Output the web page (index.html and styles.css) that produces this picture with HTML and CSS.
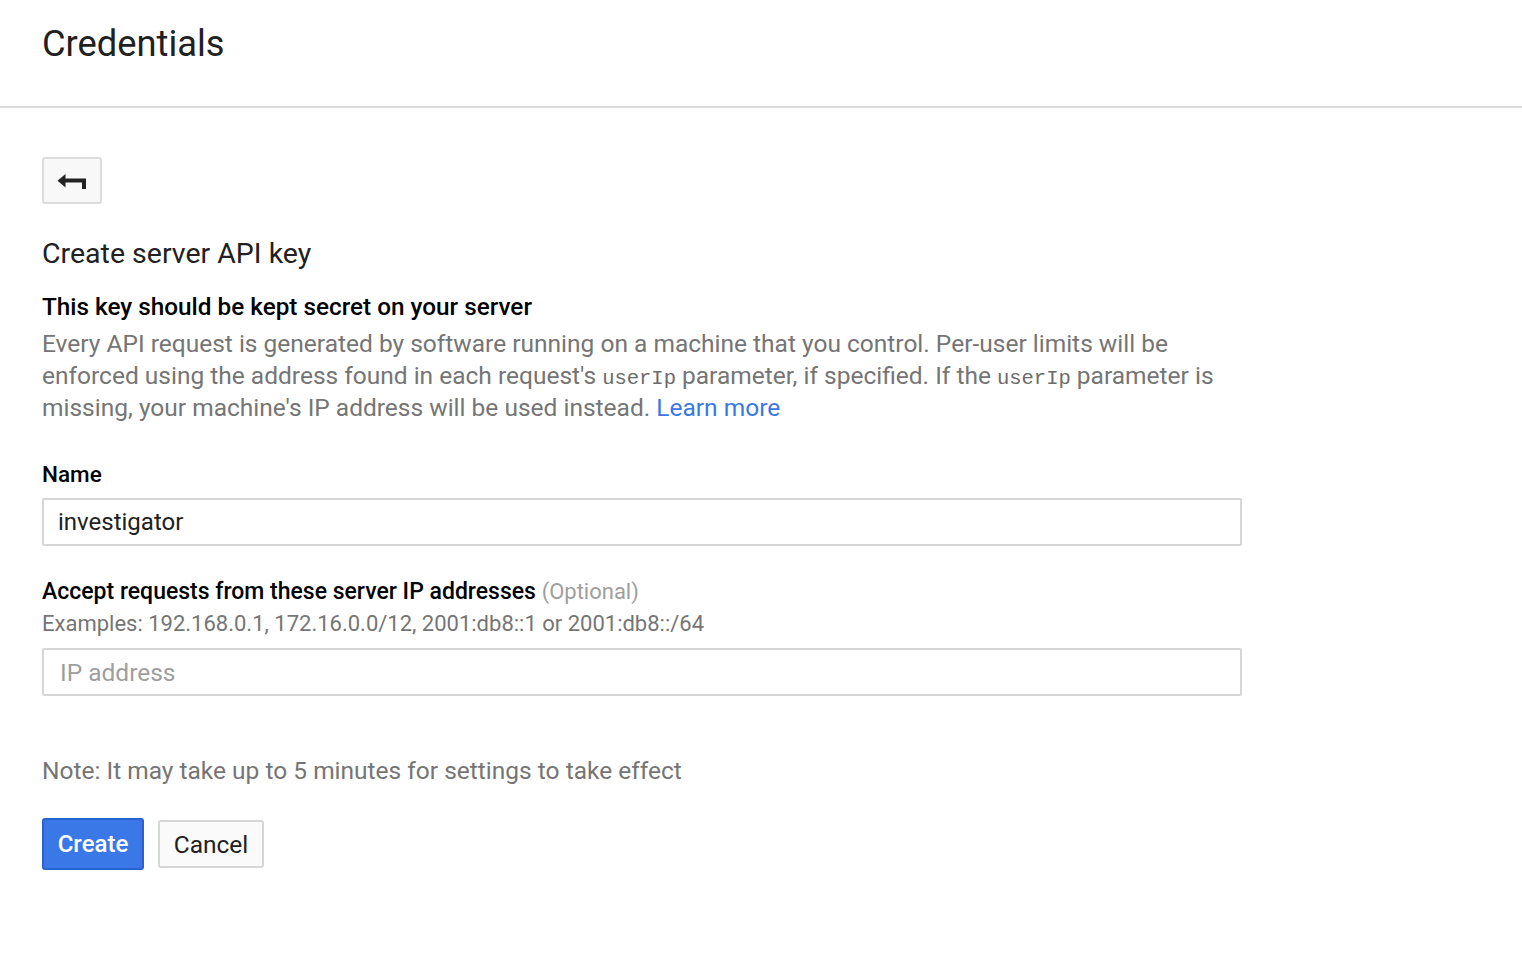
FILE: index.html
```html
<!DOCTYPE html>
<html>
<head>
<meta charset="utf-8">
<title>Credentials</title>
<link rel="stylesheet" href="styles.css">
</head>
<body>
<header class="page-header">
  <h1 class="page-title">Credentials</h1>
</header>
<main class="content">
  <button class="back-btn" type="button" aria-label="Back">
    <svg class="back-icon" width="32" height="22" viewBox="0 0 32 22">
      <polygon points="1.5,10.7 9.5,4 9.5,17.5" fill="#222"/>
      <path d="M8 8.5 H30 V19 H26 V12.5 H8 Z" fill="#222"/>
    </svg>
  </button>
  <h2 class="sub-title">Create server API key</h2>
  <p class="warn">This key should be kept secret on your server</p>
  <p class="desc">Every API request is generated by software running on a machine that you control. Per-user limits will be enforced using the address found in each request's <code>userIp</code> parameter, if specified. If the <code>userIp</code> parameter is missing, your machine's IP address will be used instead. <a class="link" href="#">Learn more</a></p>

  <label class="field-label label-name">Name</label>
  <div class="input"><span class="input-value">investigator</span></div>

  <label class="field-label label-ip">Accept requests from these server IP addresses <span class="optional">(Optional)</span></label>
  <div class="hint">Examples: 192.168.0.1, 172.16.0.0/12, 2001:db8::1 or 2001:db8::/64</div>
  <div class="input"><span class="placeholder">IP address</span></div>

  <p class="note">Note: It may take up to 5 minutes for settings to take effect</p>

  <div class="actions">
    <button class="btn btn-primary" type="button">Create</button>
    <button class="btn btn-secondary" type="button">Cancel</button>
  </div>
</main>
</body>
</html>
```
FILE: styles.css
```css
html, body {
  margin: 0;
  padding: 0;
  background: #fff;
}
body {
  font-family: Roboto, "Liberation Sans", Arial, sans-serif;
  color: #212121;
}
.page-header {
  box-sizing: border-box;
  height: 108px;
  padding: 22px 42px 0;
  border-bottom: 2px solid #dadada;
}
.page-title {
  margin: 0;
  font-size: 36.3px;
  line-height: 43px;
  font-weight: 400;
  color: #212121;
}
.content {
  padding: 0 42px;
  display: flex;
  flex-direction: column;
  align-items: flex-start;
}
.back-btn {
  margin-top: 49px;
  box-sizing: border-box;
  width: 60px;
  height: 47px;
  padding: 0;
  border: 2px solid #dcdcdc;
  border-radius: 3px;
  background: #f8f8f8;
  display: flex;
  align-items: center;
  justify-content: center;
}
.back-icon { display: block; }
.sub-title {
  margin: 32px 0 0;
  font-size: 28.5px;
  line-height: 36px;
  font-weight: 400;
  color: #212121;
}
.warn {
  margin: 19px 0 0;
  font-size: 24.3px;
  line-height: 32px;
  font-weight: 500;
  color: #000;
}
.desc {
  margin: 5px 0 0;
  max-width: 1200px;
  font-size: 24.5px;
  line-height: 32px;
  color: #757575;
}
.desc code {
  font-family: "Liberation Mono", "DejaVu Sans Mono", monospace;
  font-size: 20.5px;
  line-height: 1;
  color: #6a6a6a;
}
.link {
  color: #3b78e7;
  text-decoration: none;
}
.field-label {
  display: block;
  font-size: 23px;
  line-height: 32px;
  font-weight: 500;
  color: #000;
}
.label-name { margin-top: 34px; font-size: 22.5px; }
.label-ip { margin-top: 30px; }
.optional {
  font-weight: 400;
  color: #9e9e9e;
  font-size: 22px;
}
.hint {
  font-size: 22px;
  line-height: 32px;
  color: #757575;
}
.input {
  margin-top: 8px;
  box-sizing: border-box;
  width: 1200px;
  height: 48px;
  border: 2px solid #d6d6d6;
  border-radius: 2px;
  padding: 0 14px;
  display: flex;
  align-items: center;
  font-size: 24px;
}
.input-value { color: #212121; }
.placeholder { color: #9e9e9e; padding-left: 2px; font-size: 24.5px; }
.note {
  margin: 59px 0 0;
  font-size: 24.5px;
  line-height: 32px;
  color: #757575;
}
.actions {
  margin-top: 31px;
  display: flex;
  align-items: center;
  gap: 14px;
}
.btn {
  box-sizing: border-box;
  font-family: Roboto, "Liberation Sans", Arial, sans-serif;
  font-size: 24px;
  border-radius: 3px;
  cursor: pointer;
  padding: 0;
}
.btn-primary {
  width: 102px;
  height: 52px;
  background: #3b78e7;
  border: 2px solid #2a62d0;
  color: #fff;
  font-weight: 500;
}
.btn-secondary {
  width: 106px;
  height: 48px;
  background: #fafafa;
  border: 2px solid #d6d6d6;
  color: #212121;
  font-weight: 400;
  font-size: 24.5px;
}
```
